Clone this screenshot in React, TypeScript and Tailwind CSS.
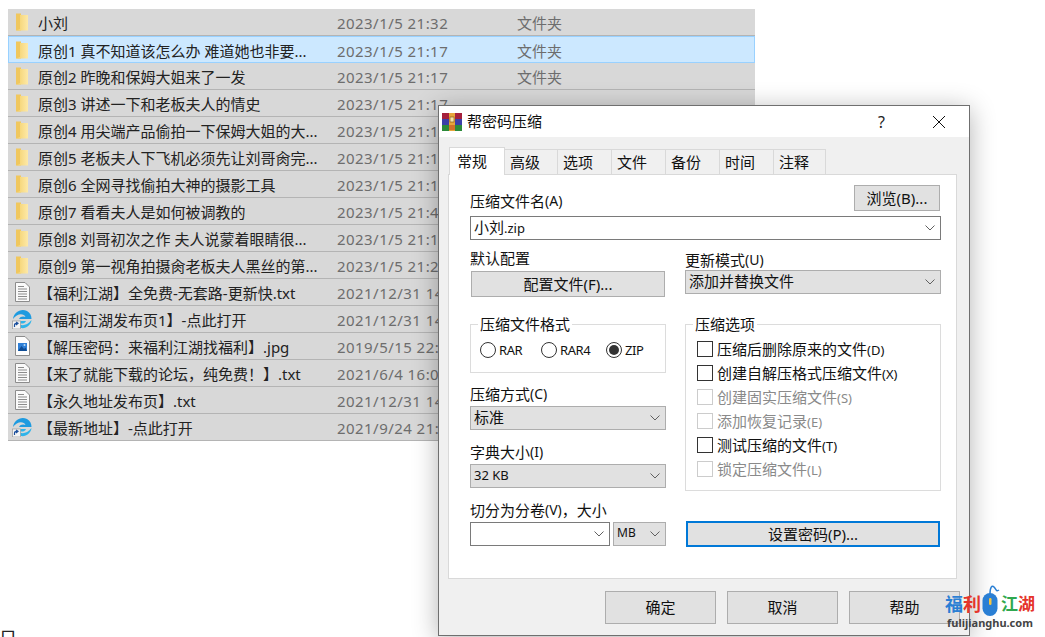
import React from "react";

const SANS = "font-['Noto_Sans','Noto_Sans_CJK_SC',sans-serif]";

type RowKind = "folder" | "txt" | "edge" | "jpg";

const ROWS: { name: string; date: string; type?: string; kind: RowKind; selected?: boolean }[] = [
  { name: "小刘", date: "2023/1/5 21:32", type: "文件夹", kind: "folder" },
  { name: "原创1 真不知道该怎么办 难道她也非要...", date: "2023/1/5 21:17", type: "文件夹", kind: "folder", selected: true },
  { name: "原创2 昨晚和保姆大姐来了一发", date: "2023/1/5 21:17", type: "文件夹", kind: "folder" },
  { name: "原创3 讲述一下和老板夫人的情史", date: "2023/1/5 21:17", kind: "folder" },
  { name: "原创4 用尖端产品偷拍一下保姆大姐的大...", date: "2023/1/5 21:17", kind: "folder" },
  { name: "原创5 老板夫人下飞机必须先让刘哥肏完...", date: "2023/1/5 21:17", kind: "folder" },
  { name: "原创6 全网寻找偷拍大神的摄影工具", date: "2023/1/5 21:17", kind: "folder" },
  { name: "原创7 看看夫人是如何被调教的", date: "2023/1/5 21:47", kind: "folder" },
  { name: "原创8 刘哥初次之作 夫人说蒙着眼睛很...", date: "2023/1/5 21:17", kind: "folder" },
  { name: "原创9 第一视角拍摄肏老板夫人黑丝的第...", date: "2023/1/5 21:27", kind: "folder" },
  { name: "【福利江湖】全免费-无套路-更新快.txt", date: "2021/12/31 14:00", kind: "txt" },
  { name: "【福利江湖发布页1】-点此打开", date: "2021/12/31 14:00", kind: "edge" },
  { name: "【解压密码：来福利江湖找福利】.jpg", date: "2019/5/15 22:00", kind: "jpg" },
  { name: "【来了就能下载的论坛，纯免费！】.txt", date: "2021/6/4 16:00", kind: "txt" },
  { name: "【永久地址发布页】.txt", date: "2021/12/31 14:00", kind: "txt" },
  { name: "【最新地址】-点此打开", date: "2021/9/24 21:00", kind: "edge" },
];

const TABS = [
  { label: "高级", w: "w-[53px]" },
  { label: "选项", w: "w-[54px]" },
  { label: "文件", w: "w-[54px]" },
  { label: "备份", w: "w-[54px]" },
  { label: "时间", w: "w-[54px]" },
  { label: "注释", w: "w-[52px]" },
];

const OPTIONS = [
  { label: "压缩后删除原来的文件", key: "(D)" },
  { label: "创建自解压格式压缩文件", key: "(X)" },
  { label: "创建固实压缩文件", key: "(S)", disabled: true },
  { label: "添加恢复记录", key: "(E)", disabled: true },
  { label: "测试压缩的文件", key: "(T)" },
  { label: "锁定压缩文件", key: "(L)", disabled: true },
];

function FileIcon({ kind }: { kind: RowKind }) {
  if (kind === "folder") {
    return (
      <svg width="20" height="20" viewBox="0 0 20 20">
        <defs>
          <linearGradient id="folderFill" x1="0" y1="0" x2="1" y2="0">
            <stop offset="0" stopColor="#f3cf67" />
            <stop offset="1" stopColor="#fde9a8" />
          </linearGradient>
        </defs>
        <path d="M4 1.5 L9 1.5 L9 18.5 L4 18.5 Z" fill="#f0c75e" />
        <path d="M8 3 L16 3 L16 18.5 L4 18.5 L8 17 Z" fill="url(#folderFill)" />
      </svg>
    );
  }
  if (kind === "txt") {
    return (
      <svg width="20" height="22" viewBox="0 0 20 22">
        <path d="M3.5 1.5 H13 L17.5 6 V20.5 H3.5 Z" fill="#fafafa" stroke="#8c8c8c" />
        <path d="M6 5.5 H12 M6 8 H15 M6 10.5 H15 M6 13 H15 M6 15.5 H15 M6 18 H15" stroke="#8c8c8c" strokeWidth="1" />
      </svg>
    );
  }
  if (kind === "jpg") {
    return (
      <svg width="20" height="22" viewBox="0 0 20 22">
        <path d="M3.5 1.5 H13 L17.5 6 V20.5 H3.5 Z" fill="#fdfdfd" stroke="#8c8c8c" />
        <rect x="6" y="8" width="9" height="8" fill="#2f7fd6" />
        <path d="M6 16 L9.5 11 L12 14 L13.5 12.5 L15 16 Z" fill="#0f4c94" />
        <circle cx="12.5" cy="10" r="1" fill="#b9dcf7" />
      </svg>
    );
  }
  return (
    <svg width="20" height="20" viewBox="0 0 20 20">
      <path d="M1 10 C2 3 9 -1 15 2 C18 3.5 19.5 6.5 19.5 10 L7 10 C8 7 12 7 13.5 8 C12 4 5 4 1 10 Z" fill="#1e9be0" />
      <path d="M19.5 11 C19 16 14 20 9 19 C5.5 18.5 3 15.5 3 12 L14 12 C13 15 9 15 7 14 C8.5 17.5 15 17 19.5 11 Z" fill="#2fb4ea" />
      <rect x="0.5" y="12" width="8" height="8" fill="#f4f4f4" stroke="#9a9a9a" strokeWidth="0.7" />
      <path d="M2.5 18 L2.5 16 C2.5 14.8 3.5 14.4 5 14.4 M4 13 L6 14.4 L4 16" fill="none" stroke="#1b4f9c" strokeWidth="1.2" />
    </svg>
  );
}

function Chevron() {
  return (
    <svg width="10" height="6" viewBox="0 0 10 6" className="shrink-0">
      <path d="M0.5 0.5 L5 5 L9.5 0.5" fill="none" stroke="#606060" strokeWidth="1" />
    </svg>
  );
}

function RarLogo() {
  return (
    <svg width="20" height="18" viewBox="0 0 20 18">
      <rect x="0" y="0" width="20" height="6" fill="#a5203c" />
      <rect x="0" y="6" width="20" height="6" fill="#3b3fa8" />
      <rect x="0" y="12" width="20" height="6" fill="#2c8a3a" />
      <rect x="7" y="0" width="6" height="18" fill="#e8a53b" />
      <rect x="8" y="4" width="4" height="5" fill="#f6e2a6" stroke="#7a4a12" strokeWidth="0.6" />
      <rect x="7" y="12" width="6" height="5" fill="#d2702a" />
    </svg>
  );
}

function Select({
  children,
  w,
  bg = "gray",
  size = "text-[15px]",
}: {
  children?: React.ReactNode;
  w: string;
  bg?: "gray" | "white";
  size?: string;
}) {
  const tone = bg === "gray" ? "bg-[#e1e1e1] border-[#adadad]" : "bg-white border-[#7a7a7a]";
  return (
    <div className={`${w} ${tone} ${size} h-[24px] border flex items-center justify-between pl-[3px] pr-[5px] leading-none text-[#111]`}>
      <span className="pb-[2px]">{children}</span>
      <Chevron />
    </div>
  );
}

function Label({ text, hot, h }: { text: string; hot?: string; h: string }) {
  return (
    <div className={`${h} flex items-center pb-[2px] text-[15px] leading-none text-[#111]`}>
      <span>{text}</span>
      {hot && <span className="text-[14px]">{hot}</span>}
    </div>
  );
}

function Radio({ label, checked, w }: { label: string; checked?: boolean; w: string }) {
  return (
    <div className={`${w} flex items-center gap-[3px]`}>
      <span className="w-[16px] h-[16px] rounded-full border border-[#333] bg-white flex items-center justify-center">
        {checked && <span className="w-[10px] h-[10px] rounded-full bg-[#333]" />}
      </span>
      <span className="text-[13px] leading-none tracking-[-0.4px] text-[#111]">{label}</span>
    </div>
  );
}

function Legend({ text }: { text: string }) {
  return (
    <span className="absolute left-[7px] -top-[13px] bg-white px-[2px] h-[24px] flex items-center text-[15px] leading-none text-[#111]">
      {text}
    </span>
  );
}

function PushButton({ text, className }: { text: string; className: string }) {
  return (
    <div className={`bg-[#e1e1e1] flex items-center justify-center text-[15px] leading-none text-[#111] ${className}`}>
      {text}
    </div>
  );
}

export default function App() {
  return (
    <div className={`relative w-[1045px] h-[637px] overflow-hidden bg-white ${SANS}`}>
      {/* File list behind the dialog */}
      <div className="w-[747px] ml-[8px] pt-[9px]">
        {ROWS.map((row) => (
          <div
            key={row.name}
            className={
              row.selected
                ? "h-[27px] grid grid-cols-[30px_299px_180px_1fr] items-center bg-[#cce8ff] outline outline-[#99d1ff] -outline-offset-1"
                : "h-[27px] grid grid-cols-[30px_299px_180px_1fr] items-center bg-[#d8d8d8] border-b border-[#b4b4b4]"
            }
          >
            <div className="pl-[4px] flex items-center">
              <FileIcon kind={row.kind} />
            </div>
            <div className="pt-[3px] text-[15px] leading-none whitespace-nowrap text-[#222]">{row.name}</div>
            <div className="pt-[3px] text-[15px] leading-none tracking-[0.45px] whitespace-nowrap text-[#6d6d6d]">{row.date}</div>
            <div className="pt-[3px] text-[15px] leading-none text-[#6d6d6d]">{row.type}</div>
          </div>
        ))}
      </div>

      <div className="absolute -left-px top-[629px] text-[18px] leading-none text-[#222]">日</div>

      {/* WinRAR dialog */}
      <div className="absolute left-[438px] top-[105px] w-[532px] h-[531px] border border-[#6f6f6f] bg-[#f0f0f0] shadow-[0_4px_24px_rgba(0,0,0,0.3)] flex flex-col">
        <div className="h-[31px] bg-white flex items-center pl-[3px] shrink-0">
          <RarLogo />
          <span className="ml-[5px] text-[15px] leading-none text-[#111]">帮密码压缩</span>
          <span className="ml-auto text-[16px] leading-none text-[#222]">?</span>
          <svg width="14" height="14" viewBox="0 0 14 14" className="ml-[47px] mr-[23px]">
            <path d="M1 1 L13 13 M13 1 L1 13" stroke="#111" strokeWidth="1" />
          </svg>
        </div>

        {/* Tabs */}
        <div className="flex items-end h-[37px] ml-[10px] shrink-0">
          <div className="w-[56px] h-[28px] pl-[7px] bg-white border border-b-0 border-[#d9d9d9] flex items-center text-[15px] leading-none text-[#111] relative top-px z-10">
            常规
          </div>
          {TABS.map((tab) => (
            <div
              key={tab.label}
              className={`${tab.w} h-[25px] pl-[5px] bg-[#f0f0f0] border border-l-0 border-b-0 border-[#d9d9d9] flex items-center text-[15px] leading-none text-[#111]`}
            >
              {tab.label}
            </div>
          ))}
        </div>

        {/* Tab panel */}
        <div className="w-[509px] h-[405px] ml-[9px] bg-white border border-[#d9d9d9] pl-[21px] pt-[10px] shrink-0">
          <div className="flex items-end justify-between w-[471px] h-[26px]">
            <Label text="压缩文件名" hot="(A)" h="h-[18px]" />
            <PushButton text="浏览(B)..." className="w-[86px] h-[26px] border border-[#adadad] mr-px" />
          </div>
          <div className="mt-[5px]">
            <Select w="w-[471px]" bg="white">
              小刘<span className="text-[13px]">.zip</span>
            </Select>
          </div>

          <div className="flex gap-[19px] mt-[8px]">
            <div className="w-[196px] flex flex-col">
              <Label text="默认配置" h="h-[23px]" />
              <PushButton text="配置文件(F)..." className="w-[194px] h-[26px] ml-px border border-[#adadad]" />

              <div className="relative mt-[27px] h-[49px] border border-[#dcdcdc] flex items-center pl-[9px] pt-[3px]">
                <Legend text="压缩文件格式" />
                <Radio label="RAR" w="w-[61px]" />
                <Radio label="RAR4" w="w-[65px]" />
                <Radio label="ZIP" checked w="w-[50px]" />
              </div>

              <Label text="压缩方式" hot="(C)" h="h-[22px] mt-[11px]" />
              <Select w="w-[196px]">标准</Select>
              <Label text="字典大小" hot="(I)" h="h-[22px] mt-[12px]" />
              <Select w="w-[196px]" size="text-[13px]">32 KB</Select>
              <div className="mt-[12px] h-[22px] pb-[2px] flex items-center text-[15px] leading-none text-[#111]">
                切分为分卷<span className="text-[14px]">(V)</span>，大小
              </div>
              <div className="flex gap-[3px]">
                <Select w="w-[140px]" bg="white" />
                <Select w="w-[53px]" size="text-[12px]">MB</Select>
              </div>
            </div>

            <div className="w-[256px] flex flex-col">
              <Label text="更新模式" hot="(U)" h="h-[22px] pt-[4px]" />
              <Select w="w-[256px]">添加并替换文件</Select>

              <div className="relative mt-[30px] h-[167px] border border-[#dcdcdc] pl-[11px] pt-[16px] flex flex-col gap-[8px]">
                <Legend text="压缩选项" />
                {OPTIONS.map((opt) => (
                  <div key={opt.label} className="h-[16px] flex items-center gap-[4px]">
                    <span className={`w-[16px] h-[16px] border ${opt.disabled ? "border-[#cccccc]" : "border-[#333]"} bg-white`} />
                    <span className={`text-[15px] leading-none whitespace-nowrap ${opt.disabled ? "text-[#8a8a8a]" : "text-[#111]"}`}>
                      {opt.label}
                      <span className="text-[13px]">{opt.key}</span>
                    </span>
                  </div>
                ))}
              </div>

              <PushButton text="设置密码(P)..." className="mt-[30px] ml-px w-[254px] h-[26px] border-2 border-[#0078d7]" />
            </div>
          </div>
        </div>

        {/* Footer buttons */}
        <div className="flex gap-[11px] ml-[166px] mt-[12px]">
          <PushButton text="确定" className="w-[111px] h-[33px] border border-[#adadad]" />
          <PushButton text="取消" className="w-[111px] h-[33px] border border-[#adadad]" />
          <PushButton text="帮助" className="w-[111px] h-[33px] border border-[#adadad]" />
        </div>
      </div>

      {/* Watermark */}
      <div className="absolute left-[945px] top-[584px] w-[92px] flex flex-col">
        <div className="flex items-end h-[32px]">
          <span className="w-[36px] text-[18px] leading-[24px] font-bold text-[#2a7fd4] whitespace-nowrap">福<span className="text-[#e5352b]">利</span></span>
          <svg width="19" height="32" viewBox="0 0 19 32" className="shrink-0">
            <path d="M9 10 C9 3 11 1 13 3 C15 5 15 8 18 6" fill="none" stroke="#2a7fd4" strokeWidth="1.5" />
            <rect x="1.5" y="9" width="15" height="23" rx="7.5" fill="#2a7fd4" />
            <rect x="8" y="14" width="2.5" height="7" rx="1.2" fill="#f5c542" />
          </svg>
          <span className="ml-px w-[34px] text-[17px] leading-[24px] font-bold text-[#2fa84f] whitespace-nowrap">江<span className="text-[#e5352b]">湖</span></span>
        </div>
        <div className="mt-px ml-[2px] text-[11px] leading-[11px] font-bold text-[#444] whitespace-nowrap">fulijianghu.com</div>
      </div>
    </div>
  );
}
